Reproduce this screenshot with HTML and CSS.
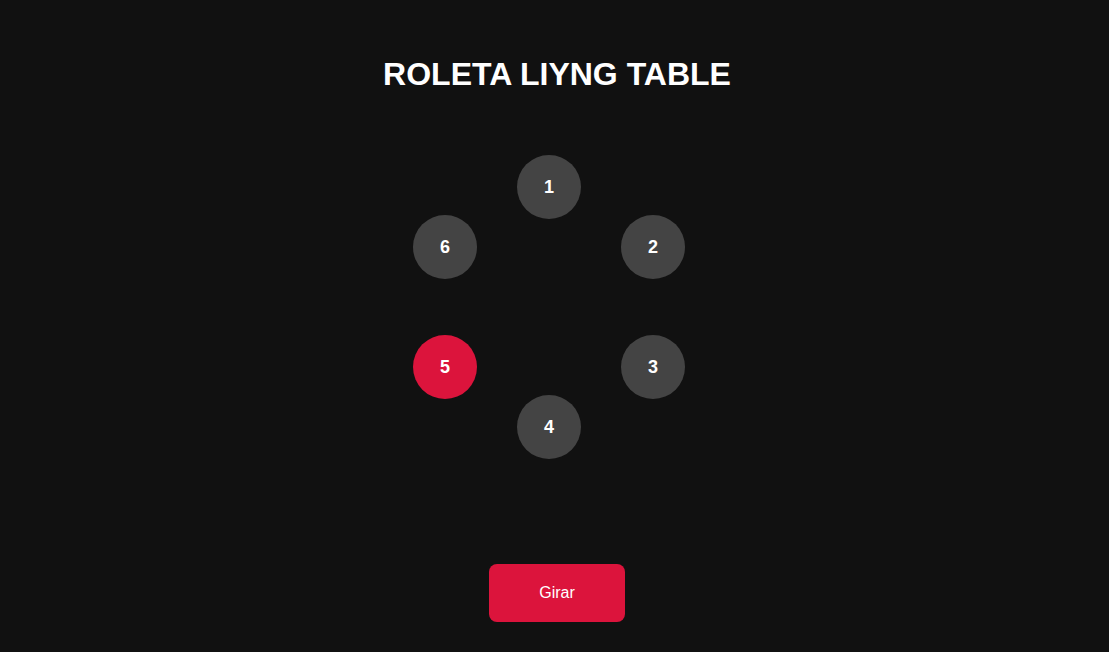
FILE: index.html
```html
<!DOCTYPE html>
<html lang="pt">
<head>
<meta charset="utf-8">
<title>Roleta</title>
<link rel="stylesheet" href="styles.css">
</head>
<body>
<main class="page">
  <h1 class="title">ROLETA LIYNG TABLE</h1>
  <div class="wheel">
    <div class="slot s1">1</div>
    <div class="slot s2">2</div>
    <div class="slot s3">3</div>
    <div class="slot s4">4</div>
    <div class="slot s5 active">5</div>
    <div class="slot s6">6</div>
  </div>
  <button class="spin">Girar</button>
</main>
</body>
</html>
```
FILE: styles.css
```css
html, body {
  margin: 0;
  padding: 0;
  background: #111111;
  color: #ffffff;
  font-family: "Liberation Sans", Arial, sans-serif;
}
.page {
  display: flex;
  flex-direction: column;
  align-items: center;
  padding-left: 5px;
  height: 652px;
  box-sizing: border-box;
}
.title {
  margin: 56px 0 0;
  font-size: 32px;
  font-weight: bold;
  line-height: 37px;
}
.wheel {
  position: relative;
  width: 304px;
  height: 304px;
  margin-top: 62px;
}
.slot {
  position: absolute;
  width: 64px;
  height: 64px;
  border-radius: 50%;
  background: #444444;
  display: flex;
  align-items: center;
  justify-content: center;
  font-size: 18px;
  font-weight: bold;
}
.slot.active { background: #dc143c; }
.s1 { left: 112px; top: 0; }
.s2 { left: 216px; top: 60px; }
.s3 { left: 216px; top: 180px; }
.s4 { left: 112px; top: 240px; }
.s5 { left: 8px; top: 180px; }
.s6 { left: 8px; top: 60px; }
.spin {
  margin-top: 105px;
  width: 136px;
  height: 58px;
  border: none;
  border-radius: 8px;
  background: #dc143c;
  color: #ffffff;
  font-family: "Liberation Sans", Arial, sans-serif;
  font-size: 16px;
  cursor: pointer;
}
```
